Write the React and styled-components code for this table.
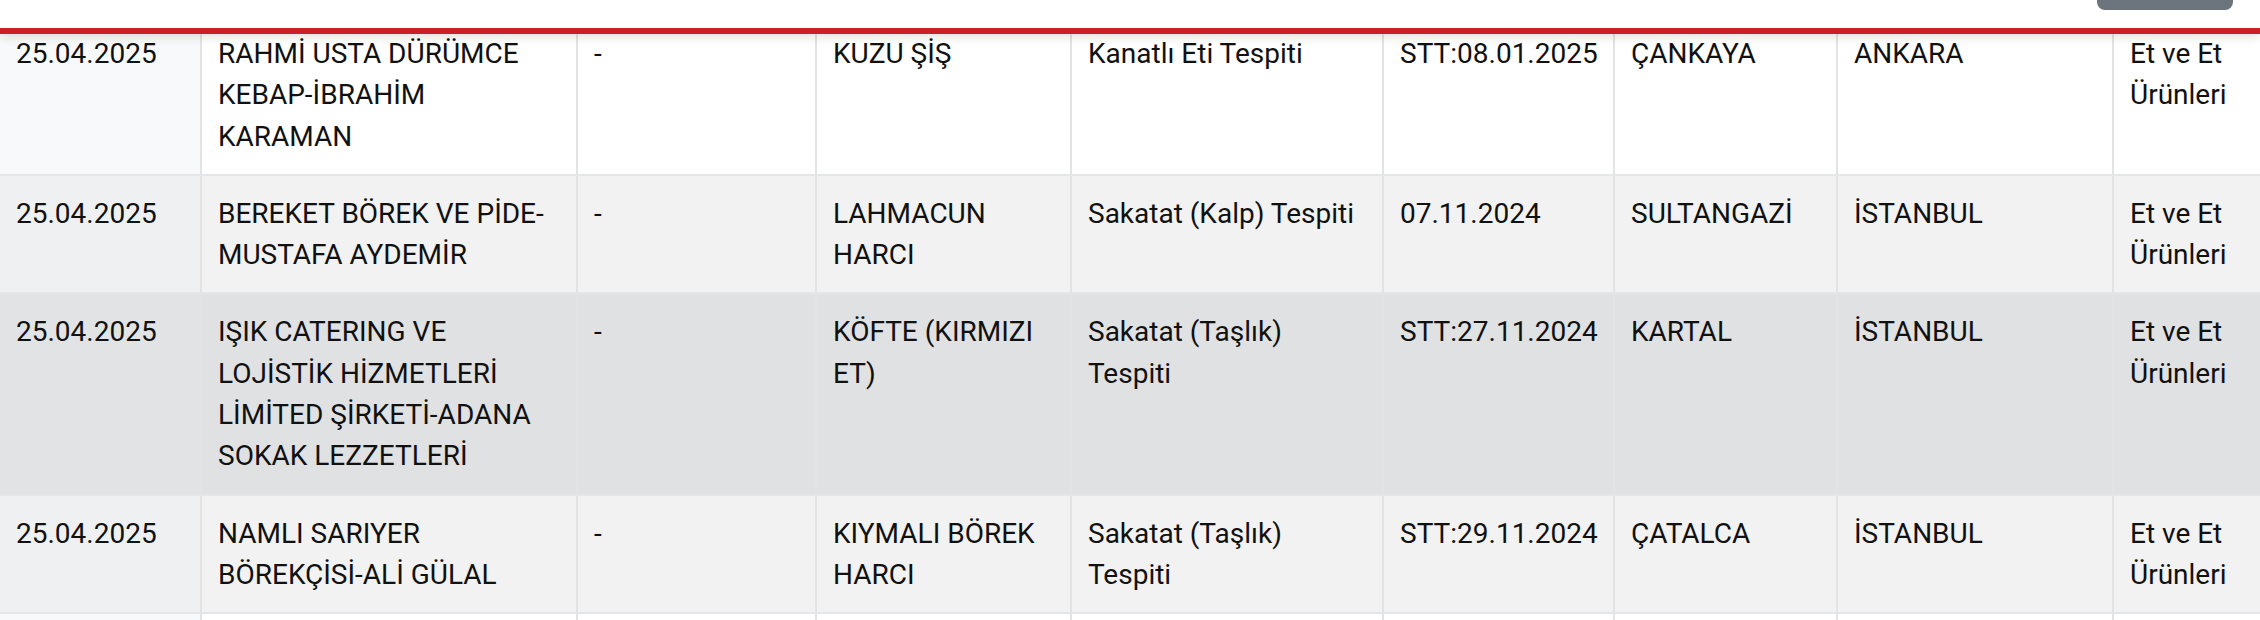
import React from "react";
import styled, { createGlobalStyle } from "styled-components";

const GlobalStyle = createGlobalStyle`
  html, body {
    margin: 0;
    padding: 0;
    background: #fff;
    overflow: hidden;
  }
  body {
    font-family: Roboto, "Noto Sans", "Liberation Sans", sans-serif;
    color: #111;
    -webkit-font-smoothing: antialiased;
  }
`;

const Page = styled.div`
  width: 2260px;
  height: 620px;
  overflow: hidden;
`;

const Header = styled.header`
  position: sticky;
  top: 0;
  z-index: 3;
  background: #fff;
  border-bottom: 6px solid #cb2029;
  box-shadow: 0 3px 10px rgba(0, 0, 0, 0.12);
`;

const Toolbar = styled.div`
  height: 28px;
  display: flex;
  justify-content: flex-end;
  align-items: flex-start;
  padding-right: 27px;
`;

const ActionButton = styled.button`
  width: 136px;
  height: 10px;
  border: 0;
  padding: 0;
  background: #6c757d;
  border-radius: 0 0 8px 8px;
`;

// table starts scrolled slightly under the sticky header
const TableWrap = styled.div`
  margin-top: -18px;
  overflow: hidden;
`;

const Table = styled.table`
  border-collapse: separate;
  border-spacing: 0;
  table-layout: fixed;
  width: 2294px;
`;

const Col = styled.col`
  width: ${(p) => p.$w}px;
`;

const tones = {
  plain: { first: "#f8f9fb", rest: "#ffffff" },
  stripe: { first: "#eef0f2", rest: "#f2f2f2" },
  active: { first: "#e1e3e5", rest: "#e0e1e3" },
};

const Cell = styled.td`
  box-sizing: border-box;
  padding: 17px 16px;
  vertical-align: top;
  text-align: left;
  font-size: 28px;
  line-height: 41.3px;
  border-right: 2px solid #e1e3e6;
  border-bottom: 2px solid #e4e6e9;
  background: ${(p) => (p.$first ? tones[p.$tone].first : tones[p.$tone].rest)};
`;

const widths = [202, 376, 239, 255, 312, 231, 223, 276, 180];

const rows = [
  {
    tone: "plain",
    cells: ["25.04.2025", "RAHMİ USTA DÜRÜMCE KEBAP-İBRAHİM KARAMAN", "-", "KUZU ŞİŞ", "Kanatlı Eti Tespiti", "STT:08.01.2025", "ÇANKAYA", "ANKARA", "Et ve Et Ürünleri"],
  },
  {
    tone: "stripe",
    cells: ["25.04.2025", "BEREKET BÖREK VE PİDE-MUSTAFA AYDEMİR", "-", "LAHMACUN HARCI", "Sakatat (Kalp) Tespiti", "07.11.2024", "SULTANGAZİ", "İSTANBUL", "Et ve Et Ürünleri"],
  },
  {
    tone: "active",
    cells: ["25.04.2025", "IŞIK CATERING VE LOJİSTİK HİZMETLERİ LİMİTED ŞİRKETİ-ADANA SOKAK LEZZETLERİ", "-", "KÖFTE (KIRMIZI ET)", "Sakatat (Taşlık) Tespiti", "STT:27.11.2024", "KARTAL", "İSTANBUL", "Et ve Et Ürünleri"],
  },
  {
    tone: "stripe",
    cells: ["25.04.2025", "NAMLI SARIYER BÖREKÇİSİ-ALİ GÜLAL", "-", "KIYMALI BÖREK HARCI", "Sakatat (Taşlık) Tespiti", "STT:29.11.2024", "ÇATALCA", "İSTANBUL", "Et ve Et Ürünleri"],
  },
  {
    // next row, only its top edge is visible
    tone: "plain",
    cells: ["", "", "", "", "", "", "", "", ""],
  },
];

const App = () => {
  return (
    <Page>
      <GlobalStyle />
      <Header>
        <Toolbar>
          <ActionButton aria-label="Menü" />
        </Toolbar>
      </Header>
      <TableWrap>
        <Table>
          <colgroup>
            {widths.map((w, i) => (
              <Col key={i} $w={w} />
            ))}
          </colgroup>
          <tbody>
            {rows.map((row, r) => (
              <tr key={r}>
                {row.cells.map((text, c) => (
                  <Cell key={c} $tone={row.tone} $first={c === 0}>
                    {text}
                  </Cell>
                ))}
              </tr>
            ))}
          </tbody>
        </Table>
      </TableWrap>
    </Page>
  );
};

export default App;
